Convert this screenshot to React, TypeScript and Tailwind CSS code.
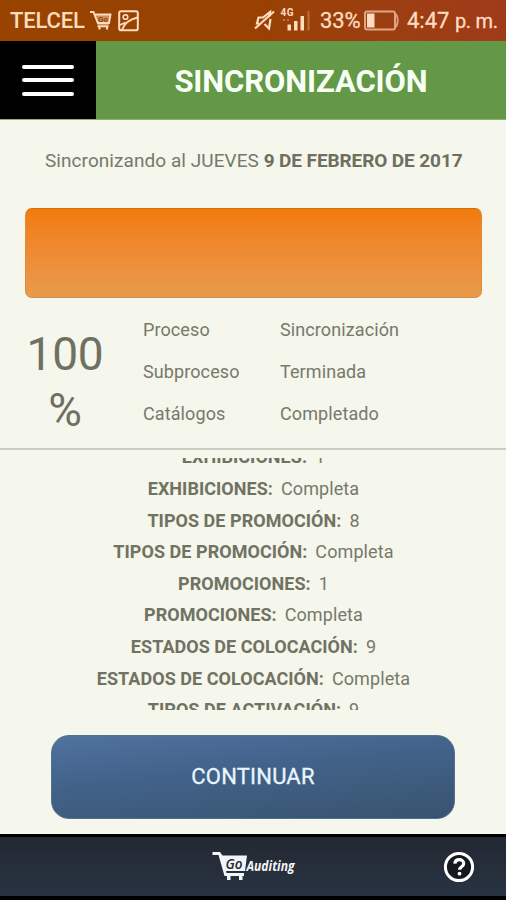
import React from 'react';

type Entry = { label: string; value: string };

const entries: Entry[] = [
  { label: 'EXHIBICIONES:', value: '1' },
  { label: 'EXHIBICIONES:', value: 'Completa' },
  { label: 'TIPOS DE PROMOCIÓN:', value: '8' },
  { label: 'TIPOS DE PROMOCIÓN:', value: 'Completa' },
  { label: 'PROMOCIONES:', value: '1' },
  { label: 'PROMOCIONES:', value: 'Completa' },
  { label: 'ESTADOS DE COLOCACIÓN:', value: '9' },
  { label: 'ESTADOS DE COLOCACIÓN:', value: 'Completa' },
  { label: 'TIPOS DE ACTIVACIÓN:', value: '9' },
];

const details: Entry[] = [
  { label: 'Proceso', value: 'Sincronización' },
  { label: 'Subproceso', value: 'Terminada' },
  { label: 'Catálogos', value: 'Completado' },
];

function StatusBar() {
  return (
    <div className="flex h-[41px] shrink-0 items-center bg-linear-to-r from-[#984400] via-[#984102] to-[#a03b1a] pl-[10px] text-[#ffdcc0]">
      <span className="w-[75px] text-[22px] leading-[43px] font-medium tracking-[-0.15px]">TELCEL</span>
      <svg className="ml-[5px] h-[21px] w-[22px] shrink-0" viewBox="0 0 22 21" fill="none">
        <path d="M0 2h3.500l4.500 11.500h11M4.500 4.500h16l-1.500 8.500H7.500" stroke="#ffdcc0" strokeWidth="1.900" />
        <path d="M6 5h14l-1.200 7.500H8z" fill="#ffdcc0" fillOpacity=".5" />
        <text x="8" y="11.500" fill="#984400" fontFamily="Roboto, sans-serif" fontWeight="700" fontSize="8">Go</text>
        <path d="M7.500 16.300h11M9.500 16v3.500M17 16v3.500" stroke="#ffdcc0" strokeWidth="2.100" />
      </svg>
      <svg className="ml-[6px] h-[22px] w-[21px] shrink-0" viewBox="0 0 21 22" fill="none" stroke="#ffdcc0" strokeWidth="2">
        <rect x="1.200" y="1.200" width="18.600" height="19" rx="1.800" />
        <circle cx="7.500" cy="7" r="2.300" strokeWidth="1.600" />
        <path d="M2 15 7.500 12.500M4 20c2-6 6.500-10.500 15.500-12.500" strokeWidth="1.800" />
      </svg>
      <svg className="ml-[115px] h-[22px] w-[21px] shrink-0" viewBox="0 0 21 22" fill="none" stroke="#ffdcc0" strokeWidth="2.200">
        <path d="M1 18.500 20 1.500" />
        <path d="M5 13.500H3l1.500-6H9L16 2l-1 5M10.500 14l4.500 4.500 1.500-9.500" />
      </svg>
      <svg className="ml-[5px] h-[30px] w-[32px] shrink-0" viewBox="0 0 32 30">
        <text x="0.500" y="10" fill="#ffdcc0" fontFamily="Roboto, sans-serif" fontWeight="700" fontSize="10" textLength="13">4G</text>
        <path d="M7.500 18.500h3.500v6H7.500zM14 15h3.500v9.500H14zM20.500 10h3.500v14.500h-3.500z" fill="#ffdcc0" />
        <path d="M3 13h2v2H3zM7 13h2v2H7z" fill="#ffdcc0" fillOpacity=".35" />
        <path d="M27.500 5h2v19.500h-2z" fill="#ffdcc0" fillOpacity=".3" />
      </svg>
      <span className="ml-[8px] w-[42px] text-[22px] leading-[43px] tracking-[-0.1px] whitespace-nowrap [-webkit-text-stroke:0.3px_#ffdcc0]">33%</span>
      <svg className="ml-[2px] h-[21px] w-[36px] shrink-0" viewBox="0 0 36 21">
        <rect x="1" y="1.500" width="30" height="18" rx="2" fill="none" stroke="#dfa583" strokeWidth="2" />
        <path d="M3 3.500h7.500v14H3z" fill="#ffdcc0" />
        <path d="M32 4q3.500 6.500 0 13" fill="none" stroke="#dfa583" strokeWidth="1.800" />
      </svg>
      <span className="ml-[7px] text-[22px] leading-[43px] whitespace-nowrap [-webkit-text-stroke:0.3px_#ffdcc0]">4:47 <span className="text-[20px] tracking-[-0.3px]">p. m.</span></span>
    </div>
  );
}

function Header() {
  return (
    <header className="flex h-[79px] shrink-0 border-b border-[#8fae79] bg-[#629846]">
      <button className="flex w-24 flex-col items-center justify-center gap-[9.5px] bg-black" aria-label="Menú">
        <span className="h-[4px] w-[52px] rounded-full bg-white" />
        <span className="h-[4px] w-[52px] rounded-full bg-white" />
        <span className="h-[4px] w-[52px] rounded-full bg-white" />
      </button>
      <h1 className="flex-1 text-center text-[31px] leading-[82px] font-bold tracking-[-0.1px] text-[#f8fff4]">SINCRONIZACIÓN</h1>
    </header>
  );
}

function Footer() {
  return (
    <footer className="flex h-[66px] shrink-0 items-center border-t-[3px] border-b-[4px] border-black bg-linear-to-b from-[#232832] to-[#283342]">
      <svg className="ml-[212px] h-[34px] w-[84px]" viewBox="0 0 84 34">
        <path d="M.5 2H8l2.500 3.500H35L33 21H14l.5 2H32v3h-1.500v4H27v-4h-8.500v4H15v-4h-2.500L6.500 5h-6z" fill="#f2f4f6" />
        <text x="13.500" y="19" fill="#202734" fontFamily="Open Sans, sans-serif" fontStyle="italic" fontWeight="600" fontSize="14" textLength="17" lengthAdjust="spacingAndGlyphs">Go</text>
        <text x="34.500" y="20.500" fill="#f2f4f6" fontFamily="Open Sans, sans-serif" fontStyle="italic" fontWeight="700" fontSize="14" textLength="48" lengthAdjust="spacingAndGlyphs">Auditing</text>
      </svg>
      <svg className="ml-[147px] h-[32px] w-[32px]" viewBox="0 0 32 32">
        <circle cx="16" cy="16" r="13.600" fill="#151920" stroke="#fff" strokeWidth="3" />
        <path d="M11.800 12.700c.3-2.800 2-4 4.400-4s4.500 1.400 4.500 3.800c0 3.300-4.100 3.200-4.100 6.300" fill="none" stroke="#fff" strokeWidth="3.200" />
        <circle cx="16.500" cy="22.700" r="1.900" fill="#fff" />
      </svg>
    </footer>
  );
}

export default function App() {
  return (
    <div className="flex h-[900px] w-[506px] flex-col overflow-hidden bg-[#f5f6ec] font-['Roboto',sans-serif] text-[#77796b]">
      <StatusBar />
      <Header />
      <main className="flex h-[714px] shrink-0 flex-col">
        <p className="mt-[29px] pl-[45px] text-[19px] leading-6 tracking-[0.06px] whitespace-nowrap">
          Sincronizando al JUEVES <b className="font-bold tracking-[-0.1px] text-[#6e6f5f]">9 DE FEBRERO DE 2017</b>
        </p>
        <div className="mt-[35px] mr-[24px] ml-[25px] h-[90px] rounded-[7px] border border-t-[#cf7209] border-r-[#e28a35] border-b-[#d98c43] border-l-[#e28a35] bg-linear-to-b from-[#f27b08] to-[#e99a4c]" />
        <section className="flex h-[152px] border-b-2 border-[#cccdc0]">
          <div className="ml-[24px] w-[82px] pt-[28px] text-center text-[46px] leading-[56px] tracking-[-0.2px] text-[#6e7061]">
            100 %
          </div>
          <dl className="ml-[37px] pt-[11px] text-[18px] leading-[42px] tracking-[0.1px]">
            {details.map((d) => (
              <div key={d.label} className="flex">
                <dt className="w-[137px]">{d.label}</dt>
                <dd>{d.value}</dd>
              </div>
            ))}
          </dl>
        </section>
        <section className="mt-[8px] h-[252px] overflow-hidden">
          <ul className="-mt-[16.6px] pl-px text-center text-[18px] leading-[31.6px] tracking-[0.1px]">
            {entries.map((e, i) => (
              <li key={i} className="whitespace-nowrap">
                <b className="mr-[8px] font-bold tracking-[0.04px] text-[#707262]">{e.label}</b>
                {e.value}
              </li>
            ))}
          </ul>
        </section>
        <button className="mt-[25px] ml-[51px] h-[84px] w-[404px] shrink-0 rounded-[18px] border border-[#527090] bg-linear-[174deg] from-[#50729f] via-[#42638a] via-40% to-[#38536f] pb-[2px] text-[22px] tracking-[0.2px] text-[#eaf5ff] [-webkit-text-stroke:0.3px_#eaf5ff]">
          CONTINUAR
        </button>
      </main>
      <Footer />
    </div>
  );
}
